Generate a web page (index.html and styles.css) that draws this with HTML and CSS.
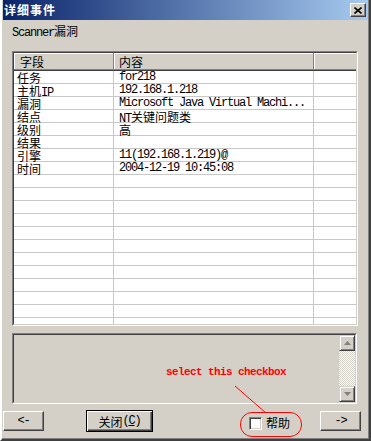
FILE: index.html
```html
<!DOCTYPE html>
<html lang="zh-CN">
<head>
  <meta charset="UTF-8" />
  <title>详细事件</title>
  <link rel="stylesheet" href="styles.css">
</head>
<body>
  <div class="window">
    <div class="titlebar">
      <span class="title">详细事件</span>
      <span class="close">
        <svg width="8" height="7" viewBox="0 0 8 7"><path d="M0.5 0.5 L7.5 6.5 M7.5 0.5 L0.5 6.5" stroke="#000" stroke-width="1.6" fill="none"/></svg>
      </span>
    </div>

    <div class="caption"><span class="en">Scanner</span>漏洞</div>

    <div class="grid">
      <div class="grid-inner">
        <div class="row head"><div class="cell c1">字段</div><div class="cell c2">内容</div><div class="cell c3"></div></div>
        <div class="row"><div class="cell c1">任务</div><div class="cell c2 en">for218</div><div class="cell c3"></div></div>
        <div class="row"><div class="cell c1">主机<span class="en">IP</span></div><div class="cell c2 en">192.168.1.218</div><div class="cell c3"></div></div>
        <div class="row"><div class="cell c1">漏洞</div><div class="cell c2 en">Microsoft Java Virtual Machi...</div><div class="cell c3"></div></div>
        <div class="row"><div class="cell c1">结点</div><div class="cell c2"><span class="en">NT</span>关键问题类</div><div class="cell c3"></div></div>
        <div class="row"><div class="cell c1">级别</div><div class="cell c2">高</div><div class="cell c3"></div></div>
        <div class="row"><div class="cell c1">结果</div><div class="cell c2"></div><div class="cell c3"></div></div>
        <div class="row"><div class="cell c1">引擎</div><div class="cell c2 en">11(192.168.1.219)@</div><div class="cell c3"></div></div>
        <div class="row"><div class="cell c1">时间</div><div class="cell c2 en">2004-12-19 10:45:08</div><div class="cell c3"></div></div>
        <div class="row"><div class="cell c1"></div><div class="cell c2"></div><div class="cell c3"></div></div>
        <div class="row"><div class="cell c1"></div><div class="cell c2"></div><div class="cell c3"></div></div>
        <div class="row"><div class="cell c1"></div><div class="cell c2"></div><div class="cell c3"></div></div>
        <div class="row"><div class="cell c1"></div><div class="cell c2"></div><div class="cell c3"></div></div>
        <div class="row"><div class="cell c1"></div><div class="cell c2"></div><div class="cell c3"></div></div>
        <div class="row"><div class="cell c1"></div><div class="cell c2"></div><div class="cell c3"></div></div>
        <div class="row"><div class="cell c1"></div><div class="cell c2"></div><div class="cell c3"></div></div>
        <div class="row"><div class="cell c1"></div><div class="cell c2"></div><div class="cell c3"></div></div>
        <div class="row"><div class="cell c1"></div><div class="cell c2"></div><div class="cell c3"></div></div>
        <div class="row"><div class="cell c1"></div><div class="cell c2"></div><div class="cell c3"></div></div>
        <div class="row"><div class="cell c1"></div><div class="cell c2"></div><div class="cell c3"></div></div>
        <div class="row"><div class="cell c1"></div><div class="cell c2"></div><div class="cell c3"></div></div>
      </div>
    </div>

    <div class="memo">
      <div class="memo-inner">
        <div class="memo-text"></div>
        <div class="scrollbar">
          <span class="sbtn">
            <svg width="7" height="4" viewBox="0 0 7 4"><polygon points="3.5,0 7,4 0,4" fill="#808080"/></svg>
          </span>
          <span class="track"></span>
          <span class="sbtn">
            <svg width="7" height="4" viewBox="0 0 7 4"><polygon points="0,0 7,0 3.5,4" fill="#808080"/></svg>
          </span>
        </div>
      </div>
    </div>

    <div class="actions">
      <span class="btn prev en">&lt;-</span>
      <span class="btn default">关闭<span class="en">(<u>C</u>)</span></span>
      <label class="check"><span class="box"></span>帮助</label>
      <span class="btn next en">-&gt;</span>
    </div>
  </div>

  <!-- red annotation drawn over the dialog -->
  <div class="note-text">select this checkbox</div>
  <svg class="note-line" width="371" height="441" viewBox="0 0 371 441">
    <line x1="235" y1="386" x2="266" y2="413" stroke="#f00" stroke-width="1"/>
  </svg>
  <div class="note-ring"></div>
</body>
</html>
```

FILE: styles.css
```css
* {
  box-sizing: border-box;
}
body {
  margin: 0;
  position: relative;
  width: 371px;
  height: 441px;
  overflow: hidden;
  background: #d4d0c8;
  font-family: "Noto Sans CJK SC", sans-serif;
  font-size: 12px;
  color: #000;
}
.en {
  font-family: "Liberation Mono", monospace;
  font-size: 12px;
  letter-spacing: -1.2px;
}
.window {
  width: 371px;
  height: 441px;
  padding: 0 1px 1px 1px;
  border-style: solid;
  border-width: 0 2px 2px 2px;
  border-color: #fff #404040 #404040 #fff;
  box-shadow: inset -1px -1px #808080;
}
.titlebar {
  height: 20px;
  display: flex;
  align-items: center;
  justify-content: space-between;
  padding: 0 2px 0 1px;
  background: linear-gradient(to right, #0a246a, #a6caf0);
}
.title {
  color: #fff;
  font-weight: bold;
  font-size: 12px;
  letter-spacing: 1px;
  line-height: 20px;
}
.close {
  width: 16px;
  height: 14px;
  display: flex;
  align-items: center;
  justify-content: center;
  background: #d4d0c8;
  border: 1px solid;
  border-color: #fff #404040 #404040 #fff;
  box-shadow: inset -1px -1px #808080;
}
.caption {
  margin: 3px 0 0 9px;
  height: 15px;
  line-height: 15px;
}
.grid {
  margin: 13px 10px 0 9px;
  height: 275px;
  border: 1px solid;
  border-color: #808080 #fff #fff #808080;
}
.grid-inner {
  height: 100%;
  overflow: hidden;
  background: #fff;
  border: 1px solid;
  border-color: #404040 #d4d0c8 #d4d0c8 #404040;
}
.row {
  display: flex;
  height: 13px;
  box-shadow: inset 0 -1px #c8c8c8;
}
.cell {
  height: 13px;
  line-height: 13px;
  white-space: nowrap;
  border-right: 1px solid #c8c8c8;
}
.c1 {
  width: 100px;
  padding-left: 3px;
}
.c2 {
  width: 200px;
  padding-left: 5px;
}
.c3 {
  flex: 1;
  border-right: none;
}
.row.head {
  height: 18px;
  box-shadow: none;
  border-bottom: 1px solid #404040;
}
.head .cell {
  height: 17px;
  line-height: 17px;
  background: #d4d0c8;
  border-right: 1px solid #808080;
  box-shadow: inset 1px 1px #fff;
  border-bottom: 1px solid #808080;
}
.head .c1 {
  padding-left: 6px;
}
.head .c3 {
  border-right: none;
}
.memo {
  margin: 7px 11px 0 9px;
  height: 71px;
  border: 1px solid;
  border-color: #808080 #fff #fff #808080;
}
.memo-inner {
  height: 100%;
  display: flex;
  border: 1px solid;
  border-color: #404040 #d4d0c8 #d4d0c8 #404040;
}
.memo-text {
  flex: 1;
}
.scrollbar {
  width: 16px;
  display: flex;
  flex-direction: column;
}
.sbtn {
  height: 16px;
  display: flex;
  align-items: center;
  justify-content: center;
  background: #d4d0c8;
  border: 1px solid;
  border-color: #d4d0c8 #404040 #404040 #d4d0c8;
  box-shadow: inset 1px 1px #fff, inset -1px -1px #808080;
}
.track {
  flex: 1;
  background: repeating-conic-gradient(#fff 0 25%, #d4d0c8 0 50%) 0 0 / 2px 2px;
}
.actions {
  display: flex;
  align-items: flex-start;
  margin-top: 6px;
  height: 22px;
}
.btn {
  display: flex;
  align-items: center;
  justify-content: center;
  height: 20px;
  margin-top: 1px;
  background: #d4d0c8;
  border: 1px solid;
  border-color: #fff #404040 #404040 #fff;
  box-shadow: inset -1px -1px #808080;
}
.prev {
  width: 41px;
}
.default {
  width: 67px;
  height: 22px;
  margin: 0 0 0 42px;
  border: 1px solid #000;
  box-shadow: inset 1px 1px #fff, inset -1px -1px #404040, inset -2px -2px #808080;
}
.check {
  display: flex;
  align-items: center;
  gap: 4px;
  width: 71px;
  height: 22px;
  margin: 2px 0 0 96px;
  line-height: 14px;
}
.box {
  width: 13px;
  height: 13px;
  background: #fff;
  border: 1px solid;
  border-color: #808080 #fff #fff #808080;
  box-shadow: inset 1px 1px #404040, inset -1px -1px #d4d0c8;
}
.next {
  width: 41px;
}
.note-text {
  position: absolute;
  left: 166px;
  top: 365px;
  color: #f00;
  font-family: "Liberation Mono", monospace;
  font-size: 11px;
  font-weight: bold;
  letter-spacing: -0.6px;
  line-height: 14px;
}
.note-line {
  position: absolute;
  left: 0;
  top: 0;
}
.note-ring {
  position: absolute;
  left: 240px;
  top: 412px;
  width: 62px;
  height: 25px;
  border: 1px solid #f00;
  border-radius: 12px;
}
```
